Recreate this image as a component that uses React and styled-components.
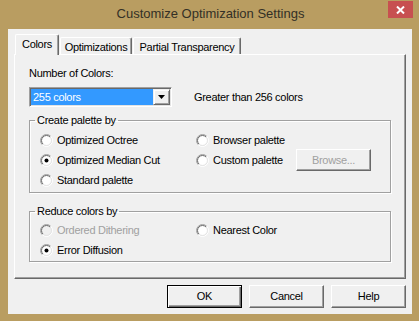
import React from 'react';
import styled, { createGlobalStyle } from 'styled-components';

const GlobalStyle = createGlobalStyle`
  html, body {
    margin: 0;
    padding: 0;
  }
  body {
    width: 419px;
    height: 321px;
    overflow: hidden;
    background: #b99d61;
    font-family: "Liberation Sans", Arial, sans-serif;
  }
`;

const Window = styled.div`
  width: 419px;
  height: 321px;
  box-sizing: border-box;
  background: #b99d61;
  display: flex;
  flex-direction: column;
  padding: 0 7px 7px 8px;
`;

const TitleBar = styled.div`
  height: 29px;
  display: grid;
  grid-template-columns: 1fr auto 1fr;
  margin-right: -1px;
`;

const Title = styled.div`
  grid-column: 2;
  font-family: "Liberation Sans", Arial, sans-serif;
  font-size: 13px;
  line-height: 27px;
  color: #333026;
  white-space: nowrap;
`;

const CloseButton = styled.div`
  grid-column: 3;
  justify-self: end;
  margin-top: 1px;
  width: 25px;
  height: 17px;
  background: #c75050;
  display: flex;
  align-items: center;
  justify-content: center;
`;

const Client = styled.div`
  flex: 1;
  background: #f0f0f0;
  display: flex;
  flex-direction: column;
  padding: 5px 6px 6px 6px;
  font-size: 11px;
  letter-spacing: -0.3px;
  color: #000;
`;

const TabStrip = styled.div`
  height: 20px;
  display: flex;
  align-items: flex-end;
  gap: 1px;
  padding-left: 1px;
  position: relative;
  z-index: 1;
`;

const Tab = styled.div`
  box-sizing: border-box;
  width: ${(p) => p.$w}px;
  height: ${(p) => (p.$active ? 21 : 17)}px;
  margin-bottom: ${(p) => (p.$active ? -1 : 0)}px;
  background: #f0f0f0;
  border-top: 1px solid #fff;
  border-left: 1px solid #fff;
  border-right: 1px solid #696969;
  border-radius: 2px 2px 0 0;
  box-shadow: inset -1px 0 0 #a0a0a0;
  text-align: center;
  padding-top: 3px;
  line-height: 13px;
  white-space: nowrap;
`;

const Panel = styled.div`
  height: 225px;
  box-sizing: border-box;
  border: 1px solid;
  border-color: #fff #696969 #696969 #fff;
  box-shadow: inset -1px -1px 0 #a0a0a0;
  padding: 12px 14px 0 14px;
  display: flex;
  flex-direction: column;
`;

const Label = styled.div`
  line-height: 13px;
  color: ${(p) => (p.$disabled ? '#a0a0a0' : '#000')};
  white-space: nowrap;
`;

const ComboRow = styled.div`
  display: flex;
  align-items: center;
  gap: 22px;
  margin-top: 7px;
`;

const Combo = styled.div`
  width: 143px;
  height: 20px;
  box-sizing: border-box;
  display: flex;
  border: 1px solid;
  border-color: #a0a0a0 #fff #fff #a0a0a0;
  box-shadow: inset 1px 1px 0 #696969, inset -1px -1px 0 #e3e3e3;
  background: #fff;
  padding: 1px;
`;

const Selection = styled.div`
  flex: 1;
  background: #3399ff;
  color: #fff;
  padding-left: 2px;
  line-height: 16px;
`;

const DropButton = styled.div`
  width: 17px;
  box-sizing: border-box;
  background: #f0f0f0;
  border: 1px solid;
  border-color: #f0f0f0 #696969 #696969 #f0f0f0;
  box-shadow: inset 1px 1px 0 #fff, inset -1px -1px 0 #a0a0a0;
  display: flex;
  align-items: center;
  justify-content: center;
`;

const Group = styled.fieldset`
  margin: ${(p) => p.$gap}px 0 0 0;
  padding: ${(p) => p.$pt}px 0 ${(p) => p.$pb}px 0;
  min-width: 0;
  border: 1px solid #a0a0a0;
  box-shadow: inset 1px 1px 0 #fff, 1px 1px 0 #fff;
`;

const Legend = styled.legend`
  margin-left: 5px;
  padding: 0 2px;
  line-height: 12px;
`;

const OptionGrid = styled.div`
  display: grid;
  grid-template-columns: 156px 100px auto;
  grid-auto-rows: 20px;
  align-items: center;
  padding-left: 10px;
`;

const Option = styled.div`
  display: flex;
  align-items: center;
  gap: 4px;
  grid-column: ${(p) => p.$col};
  grid-row: ${(p) => p.$row};
`;

const Button = styled.div`
  box-sizing: border-box;
  width: 75px;
  height: ${(p) => p.$h || 23}px;
  background: #f0f0f0;
  border: 1px solid;
  border-color: ${(p) => (p.$default ? '#000' : '#fff #696969 #696969 #fff')};
  box-shadow: ${(p) =>
    p.$default
      ? 'inset 1px 1px 0 #fff, inset -1px -1px 0 #696969, inset -2px -2px 0 #a0a0a0'
      : 'inset -1px -1px 0 #a0a0a0'};
  color: ${(p) => (p.$disabled ? '#a0a0a0' : '#000')};
  display: flex;
  align-items: center;
  justify-content: center;
  line-height: 13px;
`;

const BrowseButton = styled(Button)`
  grid-column: 3;
  grid-row: 2;
`;

const ButtonRow = styled.div`
  display: flex;
  justify-content: flex-end;
  gap: 7px;
  margin-top: 6px;
`;

const arc = (r, from, to) => {
  const c = 6.5;
  const k = 0.7071;
  const pts = {
    bl: [c - r * k, c + r * k],
    tr: [c + r * k, c - r * k],
  };
  const [x1, y1] = pts[from];
  const [x2, y2] = pts[to];
  return `M ${x1} ${y1} A ${r} ${r} 0 0 1 ${x2} ${y2}`;
};

const Radio = ({ checked, disabled }) => (
  <svg width="13" height="13" viewBox="0 0 13 13">
    <circle cx="6.5" cy="6.5" r="5" fill={disabled ? '#f0f0f0' : '#fff'} />
    <path d={arc(6, 'bl', 'tr')} stroke="#a0a0a0" fill="none" />
    <path d={arc(6, 'tr', 'bl')} stroke="#fff" fill="none" />
    <path d={arc(5, 'bl', 'tr')} stroke="#696969" fill="none" />
    <path d={arc(5, 'tr', 'bl')} stroke="#e3e3e3" fill="none" />
    {checked && <circle cx="6.5" cy="6.5" r="2" fill="#000" />}
  </svg>
);

const RadioOption = ({ col, row, checked, disabled, children }) => (
  <Option $col={col} $row={row}>
    <Radio checked={checked} disabled={disabled} />
    <Label $disabled={disabled}>{children}</Label>
  </Option>
);

export default function App() {
  return (
    <>
      <GlobalStyle />
      <Window>
        <TitleBar>
          <Title>Customize Optimization Settings</Title>
          <CloseButton>
            <svg width="9" height="8" viewBox="0 0 9 8">
              <path d="M1 0.5 L8 7.5 M8 0.5 L1 7.5" stroke="#fff" strokeWidth="2" />
            </svg>
          </CloseButton>
        </TitleBar>
        <Client>
          <TabStrip>
            <Tab $active $w={44}>Colors</Tab>
            <Tab $w={72}>Optimizations</Tab>
            <Tab $w={108}>Partial Transparency</Tab>
          </TabStrip>
          <Panel>
            <Label>Number of Colors:</Label>
            <ComboRow>
              <Combo>
                <Selection>255 colors</Selection>
                <DropButton>
                  <svg width="7" height="4" viewBox="0 0 7 4">
                    <path d="M0 0 H7 L3.5 4 Z" fill="#000" />
                  </svg>
                </DropButton>
              </Combo>
              <Label>Greater than 256 colors</Label>
            </ComboRow>
            <Group $gap={7} $pt={4} $pb={2}>
              <Legend>Create palette by</Legend>
              <OptionGrid>
                <RadioOption col={1} row={1}>Optimized Octree</RadioOption>
                <RadioOption col={1} row={2} checked>Optimized Median Cut</RadioOption>
                <RadioOption col={1} row={3}>Standard palette</RadioOption>
                <RadioOption col={2} row={1}>Browser palette</RadioOption>
                <RadioOption col={2} row={2}>Custom palette</RadioOption>
                <BrowseButton $h={22} $disabled>Browse...</BrowseButton>
              </OptionGrid>
            </Group>
            <Group $gap={12} $pt={3} $pb={1}>
              <Legend>Reduce colors by</Legend>
              <OptionGrid>
                <RadioOption col={1} row={1} disabled>Ordered Dithering</RadioOption>
                <RadioOption col={1} row={2} checked>Error Diffusion</RadioOption>
                <RadioOption col={2} row={1}>Nearest Color</RadioOption>
              </OptionGrid>
            </Group>
          </Panel>
          <ButtonRow>
            <Button $default>OK</Button>
            <Button>Cancel</Button>
            <Button>Help</Button>
          </ButtonRow>
        </Client>
      </Window>
    </>
  );
}
